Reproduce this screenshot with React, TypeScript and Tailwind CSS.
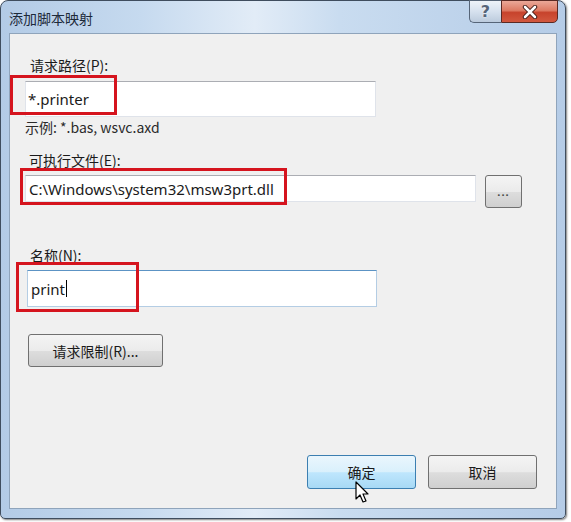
import React from "react";

export default function App() {
  return (
    <div className="w-[571px] h-[522px] bg-white overflow-hidden font-['Noto_Sans','Noto_Sans_CJK_SC',sans-serif] text-[#1a1a1a]">
      <div className="w-[566px] h-[519px] rounded-t-[8px] rounded-b-[5px] border border-[#3f4d5e] bg-[linear-gradient(90deg,#b3cbe6_0%,#c6daef_25%,#e2ecf7_45%,#c9dcf0_60%,#b5cce7_100%)] shadow-[1px_1px_2px_rgba(0,0,0,0.5)] flex flex-col">
        {/* Title bar */}
        <div className="h-[32px] flex items-start justify-between shrink-0">
          <span className="pl-[8px] pt-[7px] text-[14px] leading-[20px] text-[#1d2a3a] font-['Noto_Sans_CJK_SC',sans-serif]">
            添加脚本映射
          </span>
          <div className="flex mr-[7px] -mt-[1px]">
            <div className="w-[32px] h-[23px] rounded-bl-[5px] border border-[#566578] border-r-0 bg-[linear-gradient(180deg,#eef3f9_0%,#d6e1ee_50%,#bccbdd_100%)] flex items-center justify-center">
              <span className="text-[16px] leading-none font-bold text-[#56657a] font-['DejaVu_Sans',sans-serif] [text-shadow:0_0_2px_#ffffff]">?</span>
            </div>
            <div className="w-[57px] h-[23px] rounded-br-[5px] border border-[#5a2a24] bg-[linear-gradient(180deg,#eba898_0%,#dd7a63_45%,#c7432c_55%,#d2583f_100%)] flex items-center justify-center">
              <svg width="16" height="14" viewBox="0 0 16 14">
                <path d="M3 2 L13 12 M13 2 L3 12" stroke="#3a1510" strokeWidth="4.4" strokeLinecap="round" />
                <path d="M3 2 L13 12 M13 2 L3 12" stroke="#ffffff" strokeWidth="2.6" strokeLinecap="round" />
              </svg>
            </div>
          </div>
        </div>

        {/* Client area */}
        <div className="relative flex-1 mx-[8px] mb-[9px] border border-[#8fa4bb] bg-[#f0f0f0] flex flex-col pl-[15px] pr-[19px] pt-[23px] pb-[19px] text-[14px] leading-[16px]">
          <span className="ml-[5px] font-['Noto_Sans_CJK_SC',sans-serif]">请求路径(P):</span>
          <div className="mt-[8px] w-[351px] h-[36px] bg-white border border-[#dfe3ea] border-t-[#abadb3] flex items-center pl-[2px] text-[15px]">
            <span>*.printer</span>
          </div>
          <span className="mt-[2px] text-[#2a2a2a] font-['Noto_Sans_CJK_SC',sans-serif]">示例: *.bas, wsvc.axd</span>
          <span className="mt-[17px] ml-[4px] font-['Noto_Sans_CJK_SC',sans-serif]">可执行文件(E):</span>
          <div className="mt-[7px] flex items-start">
            <div className="w-[451px] h-[27px] bg-white border border-[#dfe3ea] border-t-[#abadb3] flex items-center pl-[3px] text-[15px]">
              <span>C:\Windows\system32\msw3prt.dll</span>
            </div>
            <div className="ml-[9px] w-[37px] h-[33px] rounded-[3px] border border-[#707070] bg-[linear-gradient(180deg,#f4f4f4_0%,#ebebeb_50%,#dddddd_52%,#cfcfcf_100%)] flex items-center justify-center">
              <span className="text-[11px] leading-none tracking-[1px] font-bold text-[#444]">...</span>
            </div>
          </div>
          <span className="mt-[39px] ml-[5px] font-['Noto_Sans_CJK_SC',sans-serif]">名称(N):</span>
          <div className="mt-[7px] ml-[2px] w-[350px] h-[37px] bg-white border border-[#b4cde4] border-t-[#5c93c4] flex items-center pl-[3px] text-[15px]">
            <span>print</span>
            <span className="ml-[1px] w-[1px] h-[17px] bg-black" />
          </div>
          <div className="mt-[27px] ml-[3px] w-[135px] h-[33px] rounded-[3px] border border-[#707070] bg-[linear-gradient(180deg,#f4f4f4_0%,#ebebeb_50%,#dddddd_52%,#cfcfcf_100%)] flex items-center justify-center font-['Noto_Sans_CJK_SC',sans-serif]">
            请求限制(R)...
          </div>
          <div className="flex-1" />
          <div className="flex justify-end gap-[12px]">
            <div className="w-[109px] h-[34px] rounded-[3px] border border-[#3c7fb1] bg-[linear-gradient(180deg,#eaf6fd_0%,#d9f0fc_50%,#bee6fd_52%,#a7d9f5_100%)] flex items-center justify-center font-['Noto_Sans_CJK_SC',sans-serif]">
              确定
            </div>
            <div className="w-[109px] h-[34px] rounded-[3px] border border-[#707070] bg-[linear-gradient(180deg,#f4f4f4_0%,#ebebeb_50%,#dddddd_52%,#cfcfcf_100%)] flex items-center justify-center font-['Noto_Sans_CJK_SC',sans-serif]">
              取消
            </div>
          </div>

          {/* Red highlight boxes */}
          <div className="absolute left-[0px] top-[41px] w-[107px] h-[40px] border-[3px] border-[#d5141e]" />
          <div className="absolute left-[10px] top-[134px] w-[267px] h-[37px] border-[3px] border-[#d5141e]" />
          <div className="absolute left-[6px] top-[228px] w-[123px] h-[50px] border-[3px] border-[#d5141e]" />

          {/* Mouse cursor */}
          <svg className="absolute left-[345px] top-[447px]" width="16" height="24" viewBox="0 0 16 24">
            <path d="M1 1 L1 18 L5 14 L8 21 L11 20 L8 13 L13 13 Z" fill="#ffffff" stroke="#000000" strokeWidth="1.2" strokeLinejoin="round" />
          </svg>
        </div>
      </div>
    </div>
  );
}
